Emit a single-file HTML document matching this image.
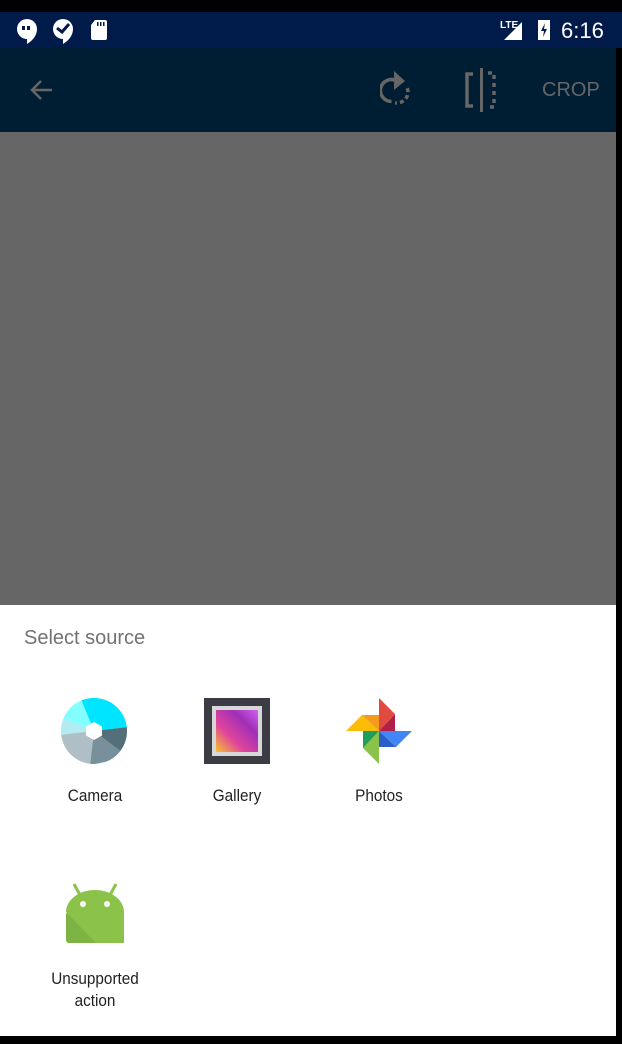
<!DOCTYPE html>
<html><head><style>
body{margin:0;width:622px;height:1044px;background:#000;position:relative;overflow:hidden;font-family:"Liberation Sans",sans-serif}
.abs{position:absolute}
.lbl{position:absolute;font-size:17px;color:#222;text-align:center;width:120px;transform:scaleX(0.9);}
</style></head><body>
<div class="abs" style="left:0;top:12px;width:622px;height:36px;background:#001a4a"></div>
<div class="abs" style="left:0;top:48px;width:616px;height:84px;background:#001e33"></div>
<div class="abs" style="left:0;top:132px;width:616px;height:473px;background:#666"></div>
<div class="abs" style="left:0;top:605px;width:616px;height:431px;background:#fff"></div>

<!-- status icons -->
<svg class="abs" style="left:14px;top:16px" width="100" height="28">
<path d="M13 3a10 10 0 1 0 0 20v5c5-3 10-8 10-15a10 10 0 0 0-10-10z" fill="#fff"/>
<rect x="8" y="10" width="3" height="4" fill="#001a4a"/><rect x="13" y="10" width="3" height="4" fill="#001a4a"/>
<path d="M49 3a10 10 0 1 0 0 20v5c5-3 10-8 10-15a10 10 0 0 0-10-10z" fill="#fff"/>
<path d="M43 12l5 4 7-8" stroke="#001a4a" stroke-width="3" fill="none"/>
<path d="M81 4h10a2 2 0 0 1 2 2v16a2 2 0 0 1-2 2H79a2 2 0 0 1-2-2V9z" fill="#fff"/>
<rect x="83" y="6" width="1.5" height="4" fill="#001a4a"/><rect x="86" y="6" width="1.5" height="4" fill="#001a4a"/><rect x="89" y="6" width="1.5" height="4" fill="#001a4a"/>
</svg>
<svg class="abs" style="left:498px;top:16px" width="60" height="28">
<text x="2" y="12" font-size="10" font-weight="bold" fill="#fff" font-family="Liberation Sans">LTE</text>
<path d="M24 6v18H6z" fill="#fff"/>
<rect x="40" y="4" width="12" height="20" fill="#fff"/>
<path d="M47 7l-4 8h3l-1 6 4-8h-3z" fill="#001a4a"/>
</svg>
<div class="abs" style="left:561px;top:18px;color:#fff;font-size:22px">6:16</div>

<!-- toolbar -->
<svg class="abs" style="left:28px;top:78px" width="26" height="24"><path d="M24 12H4M13 3l-9 9 9 9" stroke="#666" stroke-width="2.5" fill="none"/></svg>
<svg class="abs" style="left:380px;top:66px" width="40" height="44">
<path d="M17 15A11 11 0 1 0 11.5 35.5" stroke="#666" stroke-width="3.5" fill="none"/>
<path d="M14 5l11 10-11 9z" fill="#666"/>
<path d="M27.3 22.2A11 11 0 0 1 15.1 36.8" stroke="#666" stroke-width="3.5" stroke-dasharray="4 3" fill="none"/>
</svg>
<svg class="abs" style="left:462px;top:68px" width="40" height="44">
<path d="M11 6H5v32h6" stroke="#666" stroke-width="3.5" fill="none"/>
<rect x="18" y="0" width="3" height="44" fill="#666"/>
<path d="M26 5h6v34h-6" stroke="#666" stroke-width="3.5" stroke-dasharray="4 4" fill="none"/>
</svg>
<div class="abs" style="left:542px;top:79px;color:#666;font-size:20px">CROP</div>

<!-- sheet -->
<div class="abs" style="left:24px;top:627px;color:#737373;font-size:20px">Select source</div>

<svg class="abs" style="left:60px;top:697px" width="68" height="68" viewBox="0 0 68 68">
<clipPath id="c"><circle cx="34" cy="34" r="33"/></clipPath>
<g clip-path="url(#c)">
<rect width="68" height="68" fill="#b2ebf2"/>
<path d="M34 34L20 0H68V30z" fill="#00e5ff"/>
<path d="M34 34L20 0h-4L0 20z" fill="#84ffff"/>
<path d="M34 34L68 30V60z" fill="#546e7a"/>
<path d="M34 34L68 60L30 68z" fill="#78909c"/>
<path d="M34 34L30 68H0V38z" fill="#b0bec5"/>
</g>
<polygon points="34,25 42,29.5 42,38.5 34,43 26,38.5 26,29.5" fill="#fff"/>
</svg>

<svg class="abs" style="left:204px;top:698px" width="66" height="66">
<defs><linearGradient id="g" x1="0" y1="1" x2="1" y2="0"><stop offset="0" stop-color="#f6c22b"/><stop offset=".35" stop-color="#e0449c"/><stop offset=".7" stop-color="#a030b8"/><stop offset="1" stop-color="#d060f0"/></linearGradient></defs>
<rect width="66" height="66" fill="#3c3c44"/>
<rect x="8" y="8" width="50" height="50" fill="#d8d8d8"/>
<rect x="12" y="12" width="42" height="42" fill="url(#g)"/>
</svg>

<svg class="abs" style="left:346px;top:698px" width="66" height="66" viewBox="0 0 66 66">
<path d="M33 33V0l16 16z" fill="#e04a3f"/>
<path d="M33 33L49 16v17z" fill="#b2204a"/>
<path d="M33 33h33L50 49z" fill="#4285f4"/>
<path d="M33 33l17 16H33z" fill="#2a5fc8"/>
<path d="M33 33v33L17 50z" fill="#8bc34a"/>
<path d="M33 33L17 50V33z" fill="#1e9e58"/>
<path d="M33 33H0l16-16z" fill="#fbbc05"/>
<path d="M33 33L16 17h17z" fill="#f59b1c"/>
</svg>

<svg class="abs" style="left:64px;top:882px" width="62" height="62" viewBox="0 0 62 62">
<path d="M10 2l6 11M52 2l-6 11" stroke="#8bc34a" stroke-width="3"/>
<path d="M2 30a29 22 0 0 1 58 0z" fill="#8bc34a"/>
<rect x="2" y="30" width="58" height="31" rx="3" fill="#7cb342"/>
<path d="M2 30h58v31H32z" fill="#8bc34a"/>
<circle cx="19" cy="22" r="3" fill="#fff"/><circle cx="43" cy="22" r="3" fill="#fff"/>
</svg>

<div class="lbl" style="left:35px;top:786px">Camera</div>
<div class="lbl" style="left:177px;top:786px">Gallery</div>
<div class="lbl" style="left:319px;top:786px">Photos</div>
<div class="lbl" style="left:35px;top:968px;line-height:22px">Unsupported<br>action</div>
</body></html>
